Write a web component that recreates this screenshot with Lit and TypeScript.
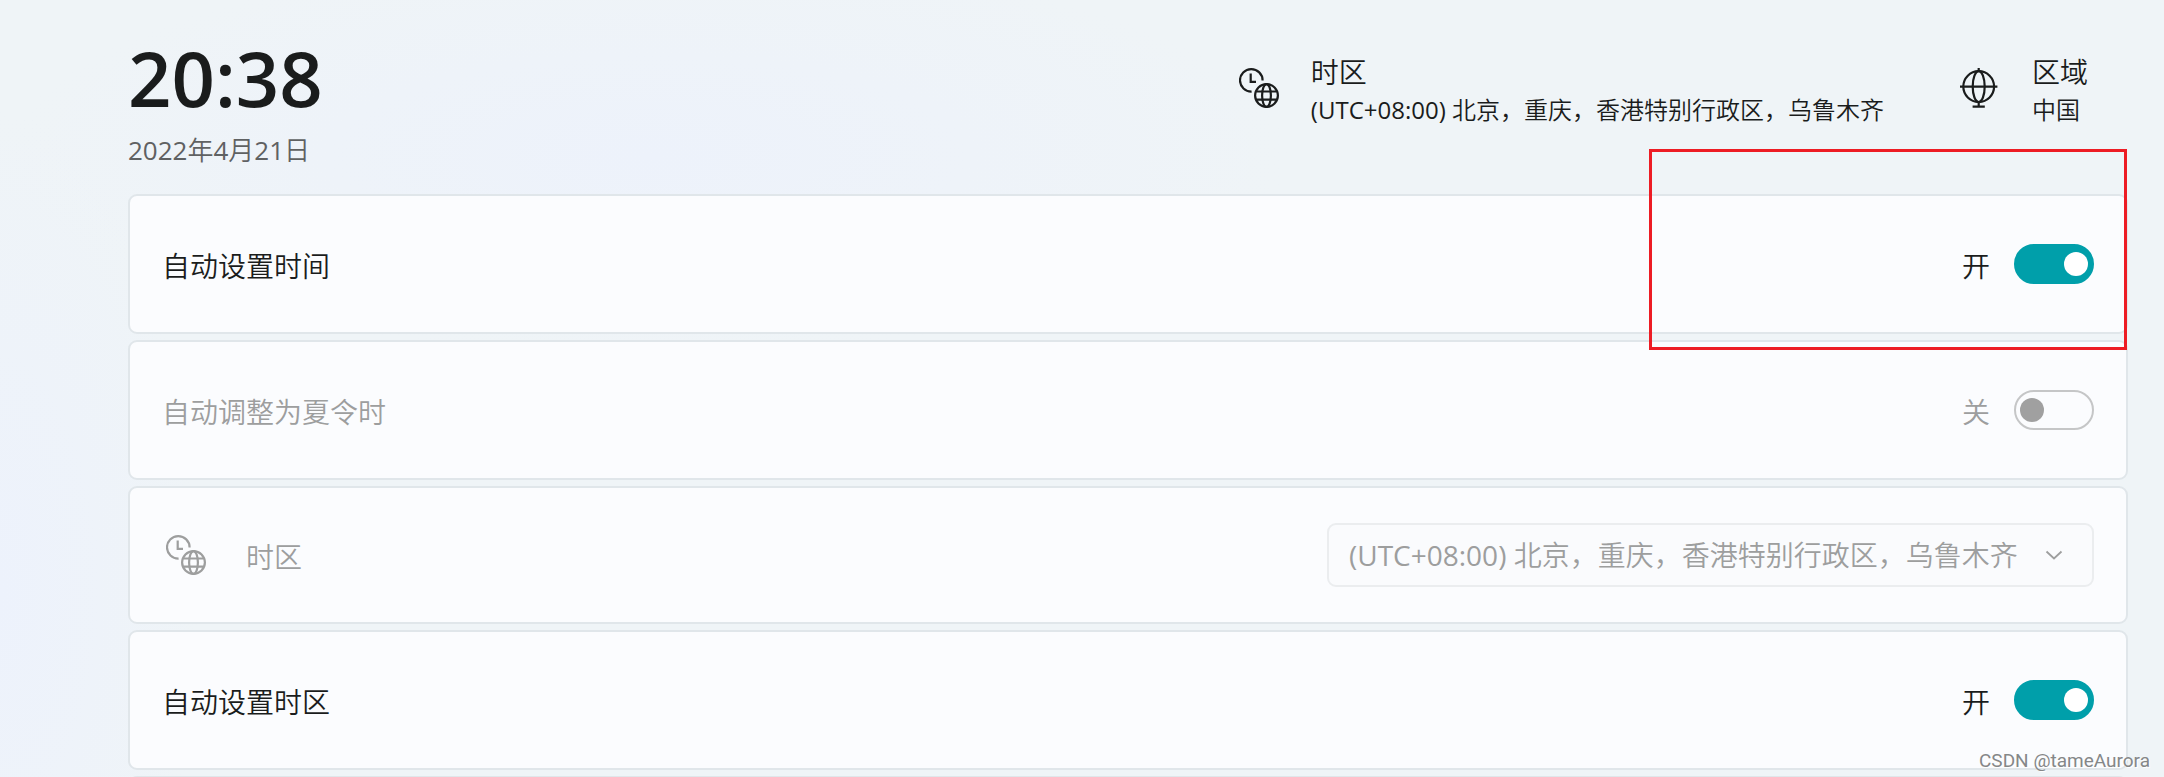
import { LitElement, html, css, svg } from "lit";
import { customElement, property, state } from "lit/decorators.js";

const TIME_ZONE = "(UTC+08:00) 北京，重庆，香港特别行政区，乌鲁木齐";

const clockGlobe = html`<svg class="icon" viewBox="0 0 40 40" fill="none" stroke="currentColor" stroke-width="2.2" aria-hidden="true">
  ${svg`<path d="M23.6 12.4A11.3 11.3 0 1 0 12.6 23.7"/>
  <path d="M11.7 5.4V13.9H17"/>
  <circle cx="27.5" cy="27.5" r="11.4"/>
  <ellipse cx="27.5" cy="27.5" rx="4.4" ry="11.4"/>
  <path d="M17 23.5H38M17 31.6H38"/>`}
</svg>`;

const standGlobe = html`<svg class="icon" viewBox="0 0 40 40" fill="none" stroke="currentColor" stroke-width="2.2" aria-hidden="true">
  ${svg`<circle cx="18.7" cy="18.6" r="15.4"/>
  <ellipse cx="18.7" cy="18.6" rx="6" ry="15.4"/>
  <path d="M0 18.6H37.4M18.7 0V3.2M18.7 34V38.6M12.6 38.7H24.8"/>`}
</svg>`;

@customElement("toggle-switch")
export class ToggleSwitch extends LitElement {
  @property() label = "";
  @property({ type: Boolean, reflect: true }) checked = false;
  @property({ type: Boolean, reflect: true }) disabled = false;

  static styles = css`
    :host {
      display: block;
    }
    .field {
      display: flex;
      align-items: center;
      gap: 24px;
      color: #1a1c1c;
    }
    :host([disabled]) .field {
      color: #9d9e9e;
    }
    .text {
      padding-top: 4px;
    }
    .input {
      appearance: none;
      box-sizing: border-box;
      display: flex;
      align-items: center;
      width: 80px;
      height: 40px;
      margin: 0;
      padding: 0 4px;
      border: 2px solid #c5c6c7;
      border-radius: 20px;
    }
    .input::before {
      content: "";
      width: 24px;
      height: 24px;
      border-radius: 50%;
      background: #a0a0a0;
    }
    .input:checked {
      justify-content: flex-end;
      border-color: #009faa;
      background: #009faa;
    }
    .input:checked::before {
      background: #fff;
    }
  `;

  private toggle(event: Event) {
    this.checked = (event.target as HTMLInputElement).checked;
  }

  render() {
    return html`<label class="field">
      <span class="text">${this.checked ? "开" : "关"}</span>
      <input class="input" type="checkbox" role="switch" aria-label=${this.label}
        .checked=${this.checked} ?disabled=${this.disabled} @change=${this.toggle} />
    </label>`;
  }
}

interface Row {
  title: string;
  kind: "toggle" | "zone";
  on?: boolean;
  disabled?: boolean;
}

@customElement("app-root")
export class AppRoot extends LitElement {
  @state() private rows: Row[] = [
    { title: "自动设置时间", kind: "toggle", on: true },
    { title: "自动调整为夏令时", kind: "toggle", disabled: true },
    { title: "时区", kind: "zone", disabled: true },
    { title: "自动设置时区", kind: "toggle", on: true },
  ];

  static styles = css`
    :host {
      display: block;
      position: relative;
      box-sizing: border-box;
      height: 100vh;
      overflow: hidden;
      padding: 40px 36px 0 128px;
      background:
        radial-gradient(ellipse 640px 200px at 30% 20%, #edf2fb, #edf2fb00),
        radial-gradient(ellipse 200px 480px at 0% 76%, #edf2fc, #edf2fc00),
        #eff4f7;
      color: #1a1c1c;
      font: 400 28px/40px "Open Sans", "Noto Sans CJK SC DemiLight", "Noto Sans CJK SC", sans-serif;
    }
    .header {
      display: flex;
      justify-content: space-between;
      align-items: flex-start;
      padding-right: 40px;
    }
    .clock {
      font-size: 76px;
      line-height: 76px;
      font-weight: 600;
    }
    .date {
      margin-top: 14px;
      font-size: 26px;
      color: #5f6162;
    }
    .facts {
      display: flex;
      gap: 76px;
      padding-top: 12px;
    }
    .fact {
      display: flex;
      gap: 32px;
    }
    .fact .icon {
      margin-top: 16px;
    }
    .value {
      font-size: 24px;
      line-height: 36px;
    }
    .icon {
      display: block;
      flex: none;
      width: 40px;
      height: 40px;
    }
    .cards {
      position: relative;
      display: flex;
      flex-direction: column;
      gap: 6px;
      margin-top: 24px;
    }
    .card {
      box-sizing: border-box;
      display: flex;
      align-items: center;
      justify-content: space-between;
      min-height: 140px;
      padding: 0 32px;
      border: 2px solid #e0e6ea;
      border-radius: 9px;
      background: #fbfcfe;
    }
    .zone {
      min-height: 138px;
    }
    .off {
      color: #9d9e9e;
    }
    .title {
      display: flex;
      align-items: center;
      gap: 40px;
    }
    .text {
      padding-top: 4px;
    }
    .title .icon {
      margin-left: 4px;
    }
    .combo {
      display: grid;
      align-items: center;
    }
    .select,
    .chevron {
      grid-area: 1 / 1;
    }
    .select {
      appearance: none;
      box-sizing: border-box;
      height: 64px;
      margin: 0;
      padding: 0 74px 0 20px;
      border: 2px solid #ebedef;
      border-radius: 9px;
      background: #fafbfd;
      color: inherit;
      font: inherit;
      opacity: 1;
    }
    .chevron {
      justify-self: end;
      width: 20px;
      height: 12px;
      margin-right: 30px;
      pointer-events: none;
    }
    .marker {
      position: absolute;
      top: -45px;
      right: 1px;
      box-sizing: border-box;
      width: 478px;
      height: 201px;
      border: 3px solid #ed1c24;
      pointer-events: none;
    }
    .watermark {
      position: absolute;
      right: 14px;
      bottom: 4px;
      color: #858788;
      font: 400 19px/24px Roboto, sans-serif;
      text-shadow: 1px 1px 0 #fff;
    }
  `;

  private renderRow(row: Row) {
    const zone = row.kind === "zone";
    return html`<section class="card ${zone ? "zone" : ""} ${row.disabled ? "off" : ""}">
      ${zone
        ? html`<label class="title" for="zone">${clockGlobe}<span class="text">${row.title}</span></label>
            <div class="combo">
              <select class="select" id="zone" ?disabled=${row.disabled}>
                <option>${TIME_ZONE}</option>
              </select>
              <svg class="chevron" viewBox="0 0 20 12" fill="none" stroke="currentColor" stroke-width="1.8" aria-hidden="true">
                <path d="M2.5 2.5L10 9.5L17.5 2.5" />
              </svg>
            </div>`
        : html`<span class="title"><span class="text">${row.title}</span></span>
            <toggle-switch .label=${row.title} ?checked=${row.on} ?disabled=${row.disabled}></toggle-switch>`}
    </section>`;
  }

  private renderFact(icon: unknown, title: string, value: string) {
    return html`<div class="fact">
      ${icon}
      <div>
        <div>${title}</div>
        <div class="value">${value}</div>
      </div>
    </div>`;
  }

  render() {
    return html`
      <header class="header">
        <div>
          <div class="clock">20:38</div>
          <div class="date">2022年4月21日</div>
        </div>
        <div class="facts">
          ${this.renderFact(clockGlobe, "时区", TIME_ZONE)}
          ${this.renderFact(standGlobe, "区域", "中国")}
        </div>
      </header>
      <main class="cards">
        ${this.rows.map((row) => this.renderRow(row))}
        <section class="card"></section>
        <div class="marker"></div>
      </main>
      <div class="watermark">CSDN @tameAurora</div>
    `;
  }
}
